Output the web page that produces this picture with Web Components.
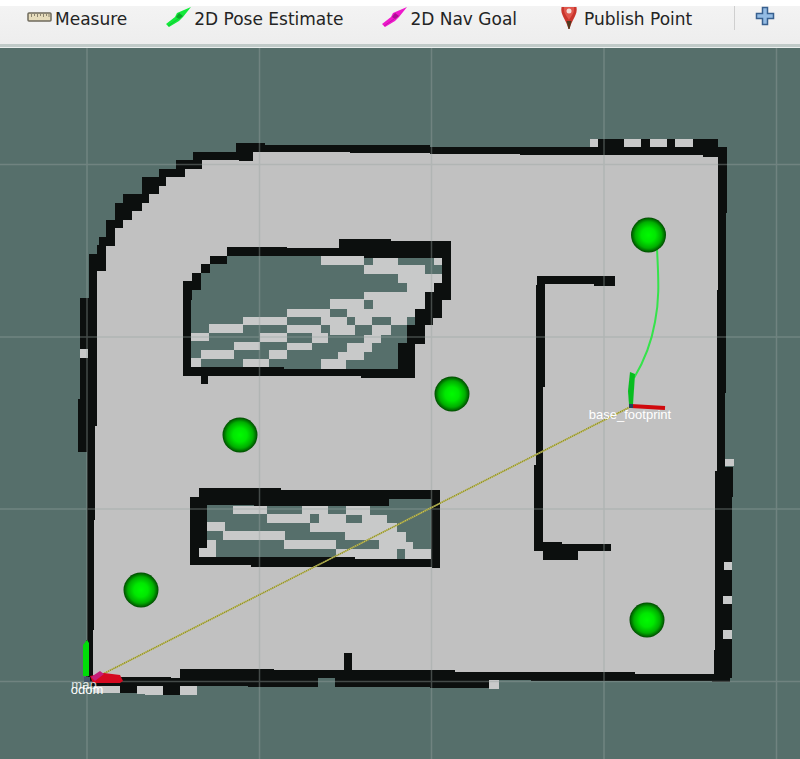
<!DOCTYPE html>
<html lang="en">
<head>
<meta charset="utf-8">
<title>Robot map viewer</title>
<style>
html, body { margin: 0; height: 100%; }
body { font-family: "DejaVu Sans", sans-serif; background: #566f6b; overflow: hidden; }
</style>
</head>
<body>
<viewer-app></viewer-app>

<template id="app-tpl">
<style>
:host { display: flex; flex-direction: column; height: 100%; min-height: 0; }
map-view { flex: 1; min-height: 0; }
svg { display: block; overflow: visible; }
</style>
<tool-bar>
  <tool-button>
    <svg slot="icon" width="26" height="24" viewBox="0 0 26 24" aria-hidden="true">
      <rect x="1" y="6" width="23" height="8" rx="1" fill="#e6dcbc" stroke="#6f6a5c" stroke-width="1.5"/>
      <path d="M4.500 7v3M7.500 7v2M10.500 7v3M13.500 7v2M16.500 7v3M19.500 7v2M22 7v3" stroke="#8b8470"/>
    </svg>Measure</tool-button>
  <tool-button>
    <svg slot="icon" width="26" height="24" viewBox="0 0 26 24" aria-hidden="true">
      <path d="M0 17 9 10 11 6 25 0 17 10 13 14 3 20Z" fill="#12ea3a"/>
      <path d="M10 10 13 6 17 9 13 12Z" fill="#0da52a"/><path d="M2 19 12 12" stroke="#10c832"/>
    </svg>2D Pose Estimate</tool-button>
  <tool-button>
    <svg slot="icon" width="26" height="24" viewBox="0 0 26 24" aria-hidden="true">
      <path d="M0 17 9 10 11 6 25 0 17 10 13 14 3 20Z" fill="#ee18cb"/>
      <path d="M10 10 13 6 17 9 13 12Z" fill="#ab0f92"/><path d="M2 19 12 12" stroke="#c913ad"/>
    </svg>2D Nav Goal</tool-button>
  <tool-button>
    <svg slot="icon" width="26" height="24" viewBox="0 0 26 24" aria-hidden="true">
      <path d="M5.500 0H20.500C22 8 16 12 13.500 22H12.500C10 12 4 8 5.500 0Z" fill="#c9352c"/>
      <path d="M10.500 14H15.500L13.500 22H12.500Z" fill="#503a20"/>
      <path d="M8 0H18C19 6 15 9 13 13 11 9 7 6 8 0Z" fill="#e0564c"/>
      <circle cx="13" cy="4" r="2.500" fill="#f3dcd8"/>
    </svg>Publish Point</tool-button>
  <tool-button slot="extra" label="Add tool">
    <svg slot="icon" width="26" height="24" viewBox="0 0 26 24" aria-hidden="true">
      <path d="M10.500 1.500h5v6h6v5h-6v6h-5v-6h-6v-5h6Z" fill="#94bce4" stroke="#38608f" stroke-width="1.500"/>
    </svg></tool-button>
</tool-bar>
<map-view></map-view>
</template>

<template id="bar-tpl">
<style>
:host { display: block; background: linear-gradient(#f3f3f3, #ededed); border-top: 6px solid #fff; border-bottom: 1px solid #e9eeed; box-sizing: border-box; height: 48px; flex: none; overflow: hidden; }
nav { display: flex; align-items: flex-start; gap: 39px; padding-left: 27px; height: 38px; border-bottom: 3px solid #c0cac8; }
.extra { display: flex; gap: 17px; margin-left: 3px; }
.sep { width: 1px; height: 24px; background: #cfcfcf; }
</style>
<nav aria-label="Tools"><slot></slot><div class="extra"><div class="sep"></div><slot name="extra"></slot></div></nav>
</template>

<template id="button-tpl">
<style>
:host { display: block; flex: none; }
button { display: flex; align-items: center; gap: 2px; margin: 0; padding: 0; border: 0; background: none; color: #242424; font: 17px/26px "DejaVu Sans", sans-serif; white-space: nowrap; }
</style>
<button type="button"><slot name="icon"></slot><span><slot></slot></span></button>
</template>

<template id="map-tpl">
<style>
:host { display: block; overflow: hidden; background: #566f6b; }
svg { display: block; width: 100%; height: 100%; }
text { font-family: "Liberation Sans", Arial, sans-serif; font-size: 13px; fill: #fff; text-anchor: middle; }
.wall { fill: #0c0f0e; } .free { fill: #c1c1c1; } .unknown { fill: #566f6b; } .speck { fill: #c8c9c9; }
</style>
<svg viewBox="0 48 800 711" preserveAspectRatio="xMidYMin slice" role="img" aria-label="Occupancy grid map">
  <defs>
    <radialGradient id="ball"><stop offset="0" stop-color="#00fa00"/><stop offset=".4" stop-color="#00e800"/><stop offset=".75" stop-color="#00ae00"/><stop offset="1" stop-color="#004a00"/></radialGradient>
  </defs>
  <g shape-rendering="crispEdges">
    <path class="wall" d="M236 143H265V145H430V147H598V139H718V147H727V213H726V393H725V467H733V497H732V678H730V682H712V681H531V680H489V688H430V687H335V678H318V687H248V686H180V695H163V686H137V693H120V686H90V678H86V640H87V452H78V399H80V298H89V254H97V245H99V237H106V220H115V203H123V194H142V177H159V169H176V160H193V152H236Z"/>
    <path class="free" d="M253 152H350V153H430V154H520V155H703V157H718V290H717V471H715V650H714V674H635V672H455V670H352V653H344V670H274V669H180V678H171V677H93V630H94V520H95V426H97V271H106V246H115V228H123V220H132V211H142V203H149V194H159V186H166V177H185V169H202V160H239V161H253Z"/>
    <path class="speck" d="M590 139h8v8h-8ZM624 139h17v8h-17ZM650 139h17v8h-17ZM675 139h18v8h-18ZM80 349h8v9h-8ZM725 459h9v7h-9ZM724 562h8v8h-8ZM723 596h9v8h-9ZM723 630h9v9h-9ZM489 680h10v9h-10ZM94 686h26v7h-26ZM137 686h26v9h-18v-1h-8ZM180 686h17v9h-17Z"/>
    <path class="wall" d="M537 276H615V286H594V284H545V387H543V542H562V544H611V551H578V560H543V551H534V465H536V285H537Z"/>
    <g transform="translate(170 230) scale(.33333)">
      <path class="wall" d="M172 50H350V55H508V28H662V32H842V211H815V263H788V286H764V342H736V443H573V438H115V462H92V438H40V153H67V129H92V101H119V79H172Z"/>
      <path class="unknown" d="M172 79H583V84H815V160H792V185H764V236H736V286H712V338H685V416H342V411H63V211H67V181H92V129H119V101H172Z"/>
      <path class="speck" d="M453 79H583V106H453ZM610 84H685V106H610ZM792 84H815V106H792ZM583 106H764V133H583ZM685 133H815V160H685ZM712 160H792V185H712ZM583 185H764V211H583ZM480 208H583V236H480ZM610 208H764V236H610ZM350 236H480V260H350ZM530 236H736V262H530ZM220 260H350V284H220ZM453 260H530V286H453ZM555 260H606V286H555ZM662 260H712V286H662ZM117 283H220V309H117ZM350 286H453V309H350ZM480 286H555V314H480ZM606 286H662V314H606ZM63 309H117V333H63ZM270 309H350V337H270ZM425 309H475V338H425ZM583 314H634V338H583ZM193 337H270V361H193ZM350 338H425V361H350ZM530 338H606V366H530ZM92 361H193V388H92ZM296 361H350V388H296ZM504 366H583V390H504ZM63 385H92V411H63ZM220 388H296V411H220ZM453 388H528V416H453Z"/>
    </g>
    <g transform="translate(180 480) scale(.33333)">
      <path class="wall" d="M57 24H302V29H780V265H756V260H214V255H29V51H57Z"/>
      <path class="unknown" d="M80 75H222V79H627V56H753V237H525V232H57V205H80Z"/>
      <path class="speck" d="M158 77H262V103H158ZM366 79H445V103H366ZM498 79H571V106H498ZM262 103H390V130H262ZM418 103H498V130H418ZM547 106H622V130H547ZM80 126H134V153H80ZM390 130H650V157H390ZM130 153H314V181H130ZM494 157H678V181H494ZM80 181H107V205H80ZM311 181H469V208H311ZM598 181H678V185H700V208H598ZM57 205H107V232H57ZM469 208H650V237H525V232H469ZM675 208H753V237H675Z"/>
    </g>
  </g>
  <path d="M87 48V759M259.500 48V759M431.500 48V759M604 48V759M776.500 48V759M0 164.500H800M0 337H800M0 509H800M0 681.500H800" stroke="#98a29f" stroke-opacity=".4" stroke-width="1.500" fill="none"/>
  <path d="M630 407 97 677" stroke="#c9c75d" stroke-width="1.500"/>
  <path d="M630 407 97 677" stroke="#858437" stroke-width="1.500" stroke-dasharray="1 1"/>
  <path d="M657 249C659 285 659 302 655 322 651 345 643 363 634 378" fill="none" stroke="#35e34b" stroke-width="2"/>
  <path d="M630 372 635 374 633 405H629L628 391Z" fill="#08bd20"/>
  <path d="M631 406 665 408" stroke="#d0090d" stroke-width="4"/>
  <path d="M629 404h4v4h-4Z" fill="#25445c"/>
  <g fill="url(#ball)">
    <circle cx="648.500" cy="235" r="17.500"/><circle cx="452" cy="394" r="17.500"/><circle cx="240" cy="435" r="17.500"/><circle cx="141" cy="590" r="17.500"/><circle cx="647" cy="620" r="17.500"/>
  </g>
  <path d="M87 640 89 643V676H83V645Z" fill="#00dd08"/>
  <path d="M90 676 104 673 120 675 123 681 120 683H93Z" fill="#d50920"/>
  <path d="M91 677 100 671 104 674 95 681Z" fill="#c51d78"/>
  <path d="M84 677h6v5h-6Z" fill="#45566a"/>
  <text x="630" y="419">base_footprint</text>
  <text x="84" y="689" opacity=".8">map</text>
  <text x="87" y="694">odom</text>
</svg>
</template>

<script>
const define = (name, id, setup) => customElements.define(name, class extends HTMLElement {
  constructor() {
    super();
    this.attachShadow({ mode: "open" }).append(document.getElementById(id).content.cloneNode(true));
  }
  connectedCallback() { if (setup) setup(this); }
});
define("tool-button", "button-tpl", el => {
  const label = el.getAttribute("label");
  if (label) el.shadowRoot.querySelector("button").setAttribute("aria-label", label);
});
define("tool-bar", "bar-tpl");
define("map-view", "map-tpl");
define("viewer-app", "app-tpl");
</script>
</body>
</html>
